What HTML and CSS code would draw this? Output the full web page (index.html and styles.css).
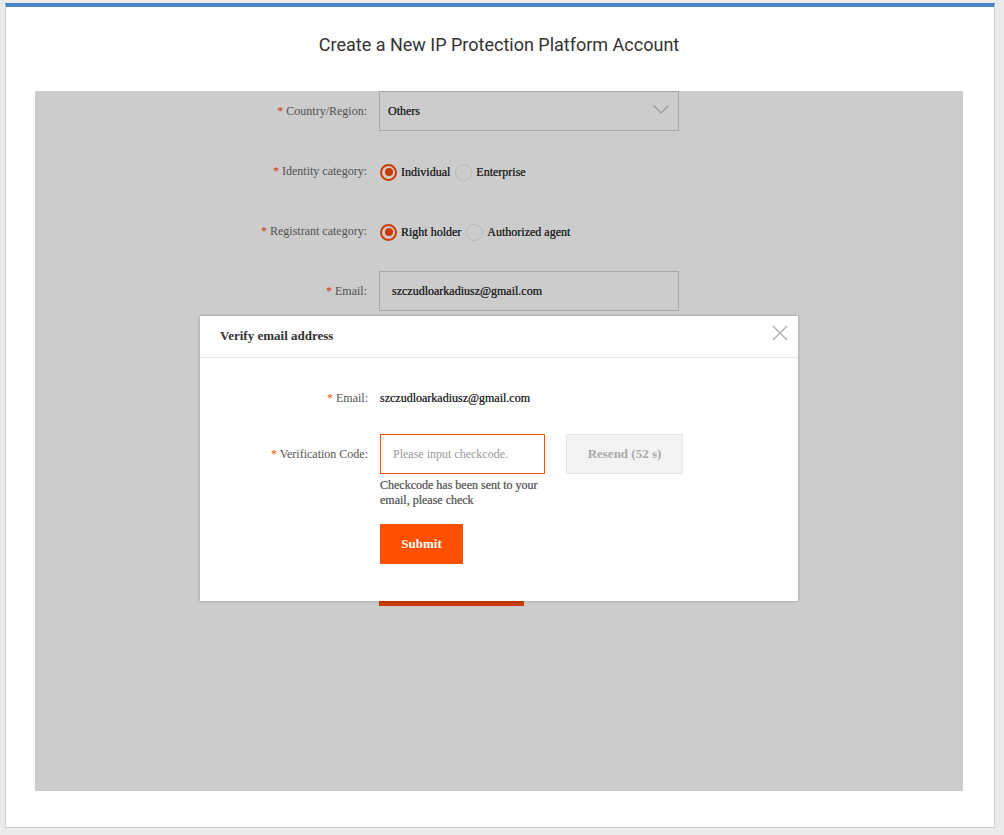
FILE: index.html
```html
<!DOCTYPE html>
<html lang="en">
<head>
  <meta charset="UTF-8">
  <title>Create a New IP Protection Platform Account</title>
  <link rel="stylesheet" href="styles.css">
</head>
<body>
  <div class="card">
    <h1>Create a New IP Protection Platform Account</h1>

    <div class="frame">
      <!-- Registration form (dimmed behind the dialog) -->
      <div class="form">
        <div class="row">
          <label class="lbl"><i>*</i> Country/Region:</label>
          <div class="select">
            <span>Others</span>
            <svg class="chev" width="16" height="9" viewBox="0 0 16 9"><path d="M0.5 0.5 L8 8 L15.5 0.5" fill="none" stroke="#bbb" stroke-width="1.1"/></svg>
          </div>
        </div>
        <div class="row">
          <label class="lbl"><i>*</i> Identity category:</label>
          <div class="radios">
            <span class="radio on"></span><span class="opt">Individual</span>
            <span class="radio"></span><span class="opt">Enterprise</span>
          </div>
        </div>
        <div class="row">
          <label class="lbl"><i>*</i> Registrant category:</label>
          <div class="radios">
            <span class="radio on"></span><span class="opt">Right holder</span>
            <span class="radio"></span><span class="opt">Authorized agent</span>
          </div>
        </div>
        <div class="row">
          <label class="lbl"><i>*</i> Email:</label>
          <div class="input">szczudloarkadiusz@gmail.com</div>
        </div>
        <div class="row">
          <label class="lbl"><i>*</i> Verification code:</label>
          <div class="input"></div>
        </div>
        <div class="row">
          <label class="lbl"><i>*</i> Password:</label>
          <div class="input"></div>
        </div>
        <div class="row">
          <label class="lbl"><i>*</i> Confirm password:</label>
          <div class="input"></div>
        </div>
        <div class="row">
          <label class="lbl"><i>*</i> Name:</label>
          <div class="input"></div>
        </div>
        <div class="row btn-row">
          <span class="lbl"></span>
          <button class="next">Next</button>
        </div>
      </div>

      <div class="mask"></div>

      <!-- Verify email dialog -->
      <div class="dialog">
        <div class="dlg-head">
          Verify email address
          <svg class="close" width="16" height="16" viewBox="0 0 16 16"><path d="M1 1 L15 15 M15 1 L1 15" stroke="#aaa" stroke-width="1.2"/></svg>
        </div>
        <div class="dlg-body">
          <div class="drow">
            <span class="dlbl"><i>*</i> Email:</span>
            <span class="dval">szczudloarkadiusz@gmail.com</span>
          </div>
          <div class="drow code">
            <span class="dlbl"><i>*</i> Verification Code:</span>
            <div class="code-col">
              <input class="code-input" placeholder="Please input checkcode.">
              <p class="hint">Checkcode has been sent to your email, please check</p>
              <button class="submit">Submit</button>
            </div>
            <button class="resend">Resend (52 s)</button>
          </div>
        </div>
      </div>
    </div>
  </div>
</body>
</html>
```

FILE: styles.css
```css
/* Base */
* { box-sizing: border-box; margin: 0; padding: 0; }
body { background: #ebebeb; margin: 3px 9px 7px 5px; font-family: 'Liberation Serif', serif; }

/* Page card */
.card { background: #fff; border: 1px solid #cfcfcf; border-top: 4px solid #4a86c5; height: 825px; padding: 0 31px 0 29px; }
.card h1 { font-family: Roboto, sans-serif; font-weight: 400; font-size: 18px; color: #333; text-align: center; padding: 27px 0 0; height: 84px; }

/* Form frame */
.frame { position: relative; background: #fff; height: 700px; overflow: hidden; }
.form { font-size: 12px; }
.row { display: flex; align-items: center; height: 40px; margin-bottom: 20px; }
.lbl { width: 344px; padding-right: 12px; text-align: right; color: #666; }
.lbl i, .dlbl i { font-style: normal; color: #ff4a00; }
.select, .input { width: 300px; height: 40px; border: 1px solid #d2d2d2; display: flex; align-items: center; color: #333; text-shadow: 0 0 0.4px #333; }
.select { padding: 0 9px 0 8px; justify-content: space-between; }
.input { padding-left: 12px; }
.chev { margin-top: -3px; }

.radios { display: flex; align-items: center; color: #333; padding-top: 2px; text-shadow: 0 0 0.4px #333; }
.radio { width: 17px; height: 17px; border: 1px solid #e6e6e6; border-radius: 50%; margin-left: 1px; margin-right: 4px; position: relative; }
.radio.on { border: 2px solid #ff4a00; }
.radio.on::after { content: ''; position: absolute; left: 2.5px; top: 2.5px; width: 8px; height: 8px; border-radius: 50%; background: #ff4a00; }
.opt { margin-right: 4px; }

.btn-row { margin-top: -5px; }
.next { width: 145px; height: 40px; border: none; background: #ff4a00; color: #fff; font: bold 13px 'Liberation Serif', serif; }

.mask { position: absolute; inset: 0; background: rgba(0, 0, 0, 0.2); }

/* Dialog */
.dialog { position: absolute; left: 165px; top: 225px; width: 598px; height: 285px; background: #fff; box-shadow: 0 0 3px rgba(0, 0, 0, 0.25); }
.dlg-head { position: relative; height: 42px; border-bottom: 1px solid #e8e8e8; padding: 12px 0 0 20px; font-size: 13px; font-weight: bold; color: #333; }
.close { position: absolute; right: 10px; top: 9px; }
.dlg-body { padding-top: 33px; font-size: 12px; }
.drow { display: flex; align-items: center; }
.dlbl { width: 180px; padding-right: 12px; text-align: right; color: #555; }
.dval { color: #333; text-shadow: 0 0 0.4px #333; }
.drow.code { align-items: flex-start; margin-top: 28px; }
.drow.code .dlbl { padding-top: 13px; }
.code-col { width: 165px; }
.code-input { width: 165px; height: 40px; border: 1px solid #ff5000; outline: none; padding-left: 12px; font: 12px 'Liberation Serif', serif; color: #333; }
.code-input::placeholder { color: #999; }
.hint { margin-top: 4px; line-height: 15px; color: #666; font-size: 12px; padding-right: 4px; text-shadow: 0 0 0.4px #666; }
.submit { margin-top: 16px; width: 83px; height: 40px; border: none; background: #ff5000; color: #fff; font: bold 13px 'Liberation Serif', serif; }
.resend { margin-left: 21px; width: 117px; height: 40px; border: 1px solid #e6e6e6; background: #f3f3f3; color: #aaa; font: bold 13px 'Liberation Serif', serif; }
```
